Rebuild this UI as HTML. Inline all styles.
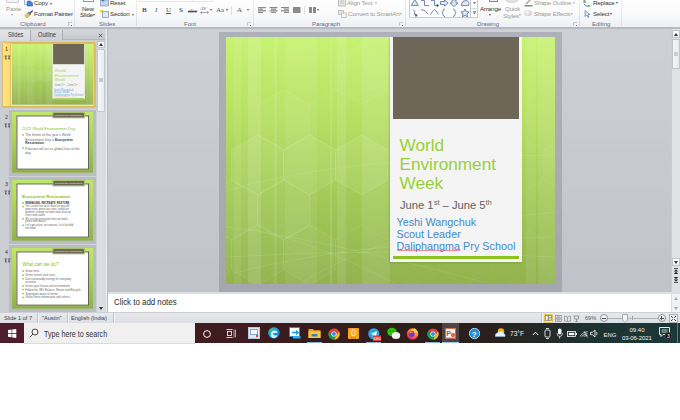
<!DOCTYPE html>
<html><head><meta charset="utf-8">
<style>

*{margin:0;padding:0;box-sizing:border-box}
html,body{width:680px;height:420px;background:#fff;overflow:hidden;font-family:"Liberation Sans",sans-serif}
.a{position:absolute}
#ribbon{left:0;top:0;width:680px;height:29px;background:linear-gradient(#fefefe,#fbfbfc 40%,#eef0f3 92%,#b7bbc1 93%,#b7bbc1);overflow:hidden}
.sep{position:absolute;top:0;width:1px;height:26px;background:linear-gradient(#eceef1,#d9dce0)}
.rt{position:absolute;font-size:6.2px;letter-spacing:-0.15px;color:#333;white-space:nowrap;line-height:6px}
.dis{color:#999}
.gl{position:absolute;top:21px;font-size:6px;color:#5d6b86;white-space:nowrap;line-height:6px}
.arr{position:absolute;width:0;height:0;border-left:1.5px solid transparent;border-right:1.5px solid transparent;border-top:2px solid #555}
.arr.dis{border-top-color:#aaa}
.dl{position:absolute;top:22px;width:4px;height:4px;border-left:1px solid #c4c7cc;border-top:1px solid #c4c7cc}
.dl::after{content:"";position:absolute;left:1.5px;top:1.5px;width:1.6px;height:1.6px;background:#7a7a7a}
.fb{position:absolute;top:7px;font-size:7px;line-height:7px;color:#555;white-space:nowrap}


#main{left:108px;top:29px;width:572px;height:263px;background:linear-gradient(#cdd0d5,#c0c4c9)}
.slide{width:329px;height:247px;overflow:hidden}
.sbg{position:absolute;left:0;top:0;width:329px;height:247px;background:linear-gradient(#c8f272 0%,#b8e064 32%,#a4cc58 62%,#92b24e 100%)}
.st{font-size:17.2px;line-height:19.4px;color:#98d038;white-space:nowrap}
.sd{font-size:11.2px;line-height:12px;color:#606060;white-space:nowrap}
.sd sup{font-size:7.2px;vertical-align:4px;line-height:0;margin-left:0.3px}
.sb{font-size:10.8px;line-height:12.1px;color:#3f8acb;white-space:nowrap}
.sq{background:linear-gradient(#f07080,#f07080) 0 calc(100% - 1px)/100% 0.8px no-repeat}
#left{left:0;top:29px;width:105px;height:283px;background:#cbcfd4}
.lt{font-size:7px;line-height:8px;color:#3a3a3a;white-space:nowrap;transform:scaleX(0.81);transform-origin:0 0}
.tn{font-size:5.5px;line-height:6px;color:#3a3a3a}
.tn2{font-size:5.5px;line-height:6px;color:#444}
.thumb{width:81px;height:61px;overflow:hidden}
.ts{position:absolute;left:0;top:0;width:329px;height:247px;transform:scale(0.2462);transform-origin:0 0;overflow:hidden}
.tfr{width:87px;background:#b9bdc2;border-top:1px solid #d0d3d7}
.tbg{position:absolute;left:0;top:0;width:329px;height:247px;background:linear-gradient(#bfe86a,#a6d058 50%,#8db24a)}
.tcard{left:18px;top:14px;width:295px;height:220px;background:#fff;border:4px solid #5b584c}
.tlab{left:165px;top:1px;width:130px;height:24px;background:#6e6657;border:3px solid #b6d872;color:#f2d444;font-size:10px;font-weight:bold;line-height:18px;text-align:center;white-space:nowrap}
.ttl{left:42px;top:59px;font-size:16.5px;line-height:20px;color:#8cc020;white-space:nowrap}
.tbul{left:42px;top:87px;width:240px;font-size:13.5px;line-height:16.5px;color:#555}
.t3 .tbul{font-size:10.5px;line-height:11.5px;top:87px;width:215px}
.t3 .tbul p{margin-bottom:3.6px}
.t3 .ttl{font-size:17.5px}
.t4 .tbul{font-size:11.5px;line-height:12.5px;top:88px;width:240px}
.t4 .tbul p{margin-bottom:3.2px}
.t4 .ttl{font-size:19px;top:57px}
.tbul p{margin-bottom:4px;padding-left:12px;position:relative}
.tbul i{position:absolute;left:0;top:3px;width:6px;height:6px;background:#8cc020}
.tbul b{color:#333}
#status{left:0;top:312px;width:680px;height:11px;background:linear-gradient(#e7e9ec,#dcdfe3);border-top:1px solid #cdd0d4}
.sbt{top:314.5px;font-size:5.6px;line-height:6px;color:#3a424c;white-space:nowrap}
.ssep{top:313px;width:1px;height:10px;background:#c3c7cc;box-shadow:1px 0 0 #f4f5f6}
.zc{top:314px;width:8px;height:8px;border-radius:50%;background:linear-gradient(#fdfdfd,#e2e4e7);border:1px solid #8c9198}
#taskbar{left:0;top:323px;width:680px;height:20px;background:linear-gradient(90deg,#4a1a25 0%,#421b20 28%,#381c1d 45%,#2e1e1c 60%,#2a201e 72%,#232a28 80%,#1d3333 88%,#1b3838 100%)}
.tbt{font-size:7px;line-height:8px;color:#f2f2f2;white-space:nowrap}

.ts .st{color:#a4d450}
.ts .sb{color:#6aa8e0}
.ts .sd{color:#888}
.ts .ttl{color:#86c01c}
.ts .tbul{color:#666}

</style></head><body>
<div id="ribbon" class="a">
<!-- Clipboard -->
<div class="a" style="left:6px;top:-3px;width:13px;height:6px;border:1px solid #c9ccd0;background:#f4f4f4;border-radius:1px"></div>
<div class="rt dis" style="left:6px;top:6px">Paste</div>
<div class="arr dis" style="left:11px;top:14px"></div>
<svg class="a" style="left:24px;top:-1px" width="10" height="8"><path d="M0.5 0.5 H4 L5.5 2 V5.5 H0.5 Z" fill="#fafcff" stroke="#7b96c4" stroke-width="0.7"/><path d="M3.2 2.3 H6.8 L8.5 4 V7 H3.2 Z" fill="#4a7ed0" stroke="#2f5aa8" stroke-width="0.6"/></svg>
<div class="rt" style="left:34px;top:0px">Copy</div>
<div class="arr" style="left:50px;top:3px"></div>
<svg class="a" style="left:24px;top:9.5px" width="10" height="8.5"><path d="M0.8 6 L3.5 3 L6 5.3 L3 8 Z" fill="#e9cf56" stroke="#9c8a30" stroke-width="0.5"/><path d="M4.8 4 L8.8 0.5" stroke="#4a3a9a" stroke-width="1.3"/><path d="M3.5 3 L5 2 L7 4 L6 5.3" fill="#888" stroke="#555" stroke-width="0.4"/></svg>
<div class="rt" style="left:34px;top:11px">Format Painter</div>
<div class="gl" style="left:20px">Clipboard</div>
<div class="dl" style="left:68px"></div>
<div class="sep" style="left:74px"></div>
<!-- Slides -->
<div class="a" style="left:83px;top:-4px;width:11px;height:6px;border:1px solid #8a9ab0;background:#fff"></div>
<div class="rt" style="left:82px;top:6px">New</div>
<div class="rt" style="left:80px;top:12px">Slide</div>
<div class="arr" style="left:93px;top:14px"></div>
<svg class="a" style="left:100px;top:-1px" width="9" height="8"><rect x="0.5" y="1" width="8" height="6" fill="#c7d6ea" stroke="#7d93b5" stroke-width="0.7"/><circle cx="3" cy="1" r="1.4" fill="#3a6fd0"/></svg>
<div class="rt" style="left:110px;top:0px">Reset</div>
<svg class="a" style="left:100px;top:10px" width="9" height="8"><rect x="0" y="0" width="3" height="2.5" fill="#f0d050"/><rect x="2.5" y="1.5" width="6" height="6" fill="#dfe6f0" stroke="#8090a8" stroke-width="0.7"/></svg>
<div class="rt" style="left:110px;top:11px">Section</div>
<div class="arr" style="left:132px;top:14px"></div>
<div class="gl" style="left:99px">Slides</div>
<div class="sep" style="left:136px"></div>
<!-- Font -->
<div class="a" style="left:139px;top:-3px;width:74px;height:4.5px;border:1px solid #e6e8ec;background:#fff"></div>
<div class="a" style="left:192px;top:-3px;width:1px;height:4.5px;background:#e6e8ec"></div>
<div class="fb" style="left:142px;font-weight:bold;font-family:'Liberation Serif'">B</div>
<div class="fb" style="left:155px;font-style:italic;font-family:'Liberation Serif'">I</div>
<div class="fb" style="left:166px;text-decoration:underline;font-family:'Liberation Serif'">U</div>
<div class="fb" style="left:179px;font-family:'Liberation Serif';font-weight:bold">S</div>
<div class="fb" style="left:188px;font-size:6.5px;top:7px;text-decoration:line-through;font-family:'Liberation Serif'">abc</div>
<div class="fb" style="left:200px;font-size:5px;top:5px;font-family:'Liberation Serif'">AV</div>
<svg class="a" style="left:200px;top:11px" width="10" height="3"><path d="M0.5 1.5 H8.5 M0.5 1.5 L2 0.3 M0.5 1.5 L2 2.7 M8.5 1.5 L7 0.3 M8.5 1.5 L7 2.7" stroke="#777" stroke-width="0.6" fill="none"/></svg>
<div class="arr" style="left:210px;top:9px"></div>
<div class="fb" style="left:216px;font-family:'Liberation Serif'">Aa</div>
<div class="arr" style="left:226px;top:9px"></div>
<div class="a" style="left:231px;top:6px;width:1px;height:9px;background:#dde0e4"></div>
<div class="fb" style="left:237px;font-family:'Liberation Serif'">A</div>
<div class="arr" style="left:247px;top:9px"></div>
<div class="gl" style="left:184px">Font</div>
<div class="dl" style="left:247px"></div>
<div class="sep" style="left:253px"></div>
<!-- Paragraph -->
<svg class="a" style="left:258px;top:7px" width="44" height="7" fill="#8a8a8a">
<rect x="0" y="0" width="8" height="1.2"/><rect x="0" y="1.6" width="5" height="1.2"/><rect x="0" y="3.2" width="8" height="1.2"/><rect x="0" y="4.8" width="5" height="1.2"/>
<rect x="11.5" y="0" width="8" height="1.2"/><rect x="13" y="1.6" width="5" height="1.2"/><rect x="11.5" y="3.2" width="8" height="1.2"/><rect x="13" y="4.8" width="5" height="1.2"/>
<rect x="23" y="0" width="8" height="1.2"/><rect x="26" y="1.6" width="5" height="1.2"/><rect x="23" y="3.2" width="8" height="1.2"/><rect x="26" y="4.8" width="5" height="1.2"/>
<rect x="35" y="0" width="7.5" height="6"/>
</svg>
<div class="a" style="left:304px;top:6px;width:1px;height:9px;background:#dde0e4"></div>
<svg class="a" style="left:309px;top:7px" width="8" height="7" fill="#8a8a8a"><rect x="0" y="0" width="3" height="6"/><rect x="4" y="0" width="3" height="6"/></svg>
<div class="arr" style="left:317px;top:9px"></div>
<div class="gl" style="left:312px">Paragraph</div>
<svg class="a" style="left:338px;top:-1px" width="8" height="8"><rect x="0.5" y="0" width="7" height="7" fill="#e8e8e8" stroke="#aaa" stroke-width="0.7"/><path d="M2 2h4M2 4h4" stroke="#aaa" stroke-width="0.6"/></svg>
<div class="rt dis" style="left:347px;top:0px">Align Text</div>
<div class="arr dis" style="left:375px;top:2px"></div>
<svg class="a" style="left:338px;top:10px" width="9" height="8"><rect x="0.5" y="0.5" width="5" height="4" fill="#e6e6e6" stroke="#aaa" stroke-width="0.6"/><rect x="3.5" y="3" width="5" height="4.5" fill="#f2f2f2" stroke="#aaa" stroke-width="0.6"/></svg>
<div class="rt dis" style="left:348px;top:11px">Convert to SmartArt</div>
<div class="arr dis" style="left:400px;top:13px"></div>
<div class="dl" style="left:399px"></div>
<div class="sep" style="left:405px"></div>
<!-- Drawing -->
<div class="a" style="left:409px;top:-3px;width:69px;height:21px;border:1px solid #c9cdd3;background:#fff"></div>
<div class="a" style="left:470px;top:-3px;width:1px;height:21px;background:#c6cad0"></div>
<div class="a" style="left:471px;top:8px;width:6px;height:1px;background:#d8dbe0"></div>
<svg class="a" style="left:410px;top:-1px" width="60" height="19" fill="none" stroke="#4a6496" stroke-width="0.75">
<path d="M1.2 6.6 L4.8 0.5 L8.4 6.6 Z" fill="#dfe8f4"/>
<path d="M11 1.5 H14.5 V6.5 H19"/>
<path d="M21 1.5 H24.5 V6.5 H27.5"/><path d="M27 5.3 L28.8 6.5 L27 7.7 Z" fill="#2a3a60"/>
<path d="M30.5 2.5 H34.5 V0.8 L38.2 4 L34.5 7.2 V5.5 H30.5 Z" fill="#dfe8f4"/>
<path d="M42 0.8 H46 V4 H48 L44 7.6 L40 4 H42 Z" fill="#dfe8f4"/>
<path d="M51.5 6.6 Q50.5 4.5 52.5 4 Q52.5 1.5 55 1.8 Q57.5 0.5 58.5 3.2 Q59.8 4.5 58.5 6.6 Z" fill="#dfe8f4"/>
<path d="M3 10.5 L5 13 L4 15 L6.5 16.5"/><path d="M5.5 15 L7.3 16.3 L5.8 17.6 Z" fill="#2a3a60"/>
<path d="M11 10.5 Q15.5 10 18 15.5"/>
<path d="M20.5 15.5 Q23 11 24.5 10.5 Q26 11 28.5 15.5"/>
<path d="M35 10 Q33 10 33 12 Q33 13.6 31.8 13.8 Q33 14 33 15.6 Q33 17.5 35 17.5"/>
<path d="M43 10 Q45 10 45 12 Q45 13.6 46.2 13.8 Q45 14 45 15.6 Q45 17.5 43 17.5"/>
<path d="M55 10 L56.3 12.7 L59.2 13 L57 15 L57.7 17.8 L55 16.4 L52.3 17.8 L53 15 L50.8 13 L53.7 12.7 Z" fill="#dfe8f4"/>
</svg>
<svg class="a" style="left:471px;top:0px" width="7" height="18" fill="#555"><path d="M2 2.3 H5 L3.5 4 Z"/><rect x="2" y="11" width="3" height="0.6"/><path d="M2 12.5 H5 L3.5 14.2 Z"/></svg>
<div class="a" style="left:489px;top:-4px;width:9px;height:6px;border:1px solid #888;background:#eee"></div>
<div class="rt" style="left:480px;top:6px">Arrange</div>
<div class="arr" style="left:489px;top:14px"></div>
<div class="a" style="left:505px;top:-6px;width:14px;height:9px;border-radius:50%;background:radial-gradient(#f4f4f4,#c8c8c8)"></div>
<div class="rt dis" style="left:505px;top:6px">Quick</div>
<div class="rt dis" style="left:503px;top:13px">Styles</div>
<div class="arr dis" style="left:519px;top:14px"></div>
<svg class="a" style="left:524px;top:-1px" width="9" height="8"><path d="M2 5 L7 0" stroke="#aaa" stroke-width="1.5"/><rect x="0.5" y="6" width="8" height="1.5" fill="#888"/></svg>
<div class="rt dis" style="left:534px;top:0px">Shape Outline</div>
<div class="arr dis" style="left:573px;top:2px"></div>
<div class="a" style="left:524px;top:10px;width:8px;height:6px;border-radius:50%;background:radial-gradient(circle at 40% 35%,#f8f8f8,#bdbdbd)"></div>
<div class="rt dis" style="left:534px;top:11px">Shape Effects</div>
<div class="arr dis" style="left:571px;top:13px"></div>
<div class="gl" style="left:477px">Drawing</div>
<div class="dl" style="left:573px"></div>
<div class="sep" style="left:579px"></div>
<!-- Editing -->
<svg class="a" style="left:583px;top:-1px" width="9" height="9"><text x="0" y="4" font-size="5" font-family="Liberation Sans" fill="#444">a</text><path d="M1 5 L3 7 L6 7" stroke="#2a66c0" stroke-width="0.8" fill="none"/><path d="M5.5 6 L8 7 L5.5 8 Z" fill="#34a034"/></svg>
<div class="rt" style="left:593px;top:0px">Replace</div>
<div class="arr" style="left:616px;top:2px"></div>
<svg class="a" style="left:584px;top:10px" width="7" height="8"><path d="M1 0.5 L1 6.5 L2.5 5 L4 7.5 L5 7 L3.8 4.6 L6 4.5 Z" fill="#d9e6f5" stroke="#4870b0" stroke-width="0.6"/></svg>
<div class="rt" style="left:593px;top:11px">Select</div>
<div class="arr" style="left:610px;top:13px"></div>
<div class="gl" style="left:592px">Editing</div>
<div class="sep" style="left:621px"></div>
</div>
<div id="left" class="a"></div>
<div class="a" style="left:105px;top:29px;width:3px;height:283px;background:#eff0f2;border-left:1px solid #d5d8dc;border-right:1px solid #b8bcc2"></div>
<div class="a" style="left:0;top:29px;width:105px;height:11px;background:linear-gradient(#d3d6da,#c6cace);border-bottom:1px solid #b3b7bd"></div>
<div class="a" style="left:0;top:30px;width:31px;height:11px;background:linear-gradient(#e3e5e8,#d6d9dd);border-right:1px solid #a9adb3"></div>
<div class="a" style="left:31px;top:30px;width:32px;height:10px;background:linear-gradient(#d8dbdf,#cdd0d4);border-right:1px solid #a9adb3"></div>
<div class="a lt" style="left:8px;top:31px">Slides</div>
<div class="a lt" style="left:38px;top:31px">Outline</div>
<svg class="a" style="left:97px;top:32px" width="7" height="7"><path d="M1.8 1.8 L5.2 5.2 M5.2 1.8 L1.8 5.2" stroke="#555" stroke-width="0.9"/></svg>
<!-- scrollbar -->
<div class="a" style="left:97px;top:41px;width:8px;height:271px;background:#dadde1"></div>
<div class="a" style="left:97px;top:41px;width:8px;height:7px;background:linear-gradient(#fbfbfc,#eceef0);border:1px solid #c4c8cd"></div>
<div class="a" style="left:99px;top:43px;width:0;height:0;border-left:2.5px solid transparent;border-right:2.5px solid transparent;border-bottom:3px solid #333"></div>
<div class="a" style="left:97px;top:49px;width:8px;height:63px;background:linear-gradient(90deg,#f7f8f9,#e9ebee);border:1px solid #c4c8cd;border-radius:1px"></div>
<div class="a" style="left:99px;top:78px;width:4px;height:4px;background:#c6c9ce"></div>
<div class="a" style="left:99px;top:307px;width:0;height:0;border-left:2.5px solid transparent;border-right:2.5px solid transparent;border-top:3px solid #333"></div>
<!-- thumb 1 selected -->
<div class="a" style="left:1.5px;top:41.5px;width:94.5px;height:66.5px;border:2px solid #e0bd58;border-radius:2px"></div>
<div class="a" style="left:3px;top:43px;width:7px;height:63px;background:linear-gradient(90deg,#ffe486,#fddb70)"></div>
<div class="a" style="left:9.5px;top:43px;width:2.5px;height:63px;background:#e6c462"></div>
<div class="a" style="left:11.3px;top:43.5px;width:82px;height:62px;background:#e2e6d8"></div>
<div class="a tn" style="left:5px;top:46px">1</div>
<svg class="a" style="left:3.5px;top:54.5px" width="7" height="5" fill="none" stroke="#444" stroke-width="0.7"><path d="M0.5 1 H3 M1.8 1 V4.5 M0.8 2.8 L2.8 4.2 M3.8 1 H6.5 M5.1 1 V4.5 M4 2.8 L6 4.2"/></svg>
<div class="a thumb" style="left:12px;top:44px"><div class="ts"><div class="sbg"></div>
<svg class="a" style="left:0;top:0" width="329" height="247">
<g fill="#fff">
<rect x="8" y="0" width="7" height="247" opacity="0.08"/>
<rect x="22" y="0" width="13" height="247" opacity="0.12"/>
<rect x="48" y="0" width="3" height="247" opacity="0.10"/>
<rect x="59" y="0" width="32" height="247" opacity="0.07"/>
<rect x="104" y="0" width="2" height="247" opacity="0.12"/>
<rect x="111" y="0" width="9" height="247" opacity="0.10"/>
<rect x="136" y="0" width="3" height="247" opacity="0.10"/>
<rect x="139" y="0" width="25" height="247" opacity="0.10"/>
<rect x="300" y="0" width="10" height="247" opacity="0.08"/>
<rect x="312" y="0" width="17" height="247" opacity="0.10"/>
</g>
<g fill="#fff" stroke="#fff" stroke-width="0.8"><path d="M-20.3 7 L5.7 22 L5.7 52 L-20.3 67 L-46.3 52 L-46.3 22 Z" fill-opacity="0.0" stroke-opacity="0.045"/><path d="M31.7 7 L57.7 22 L57.7 52 L31.7 67 L5.7 52 L5.7 22 Z" fill-opacity="0.0" stroke-opacity="0.045"/><path d="M83.7 7 L109.7 22 L109.7 52 L83.7 67 L57.7 52 L57.7 22 Z" fill-opacity="0.0" stroke-opacity="0.045"/><path d="M135.7 7 L161.7 22 L161.7 52 L135.7 67 L109.7 52 L109.7 22 Z" fill-opacity="0.03" stroke-opacity="0.1"/><path d="M187.7 7 L213.7 22 L213.7 52 L187.7 67 L161.7 52 L161.7 22 Z" fill-opacity="0.0" stroke-opacity="0.045"/><path d="M239.7 7 L265.7 22 L265.7 52 L239.7 67 L213.7 52 L213.7 22 Z" fill-opacity="0.0" stroke-opacity="0.045"/><path d="M291.7 7 L317.7 22 L317.7 52 L291.7 67 L265.7 52 L265.7 22 Z" fill-opacity="0.0" stroke-opacity="0.045"/><path d="M343.7 7 L369.7 22 L369.7 52 L343.7 67 L317.7 52 L317.7 22 Z" fill-opacity="0.0" stroke-opacity="0.045"/><path d="M5.7 53 L31.7 68 L31.7 98 L5.7 113 L-20.3 98 L-20.3 68 Z" fill-opacity="0.0" stroke-opacity="0.045"/><path d="M57.7 53 L83.7 68 L83.7 98 L57.7 113 L31.7 98 L31.7 68 Z" fill-opacity="0.035" stroke-opacity="0.12"/><path d="M109.7 53 L135.7 68 L135.7 98 L109.7 113 L83.7 98 L83.7 68 Z" fill-opacity="0.0" stroke-opacity="0.045"/><path d="M161.7 53 L187.7 68 L187.7 98 L161.7 113 L135.7 98 L135.7 68 Z" fill-opacity="0.0" stroke-opacity="0.045"/><path d="M213.7 53 L239.7 68 L239.7 98 L213.7 113 L187.7 98 L187.7 68 Z" fill-opacity="0.0" stroke-opacity="0.045"/><path d="M265.7 53 L291.7 68 L291.7 98 L265.7 113 L239.7 98 L239.7 68 Z" fill-opacity="0.0" stroke-opacity="0.045"/><path d="M317.7 53 L343.7 68 L343.7 98 L317.7 113 L291.7 98 L291.7 68 Z" fill-opacity="0.0" stroke-opacity="0.045"/><path d="M-20.3 98 L5.7 113 L5.7 143 L-20.3 158 L-46.3 143 L-46.3 113 Z" fill-opacity="0.0" stroke-opacity="0.045"/><path d="M31.7 98 L57.7 113 L57.7 143 L31.7 158 L5.7 143 L5.7 113 Z" fill-opacity="0.07" stroke-opacity="0.16"/><path d="M83.7 98 L109.7 113 L109.7 143 L83.7 158 L57.7 143 L57.7 113 Z" fill-opacity="0.07" stroke-opacity="0.16"/><path d="M135.7 98 L161.7 113 L161.7 143 L135.7 158 L109.7 143 L109.7 113 Z" fill-opacity="0.07" stroke-opacity="0.16"/><path d="M187.7 98 L213.7 113 L213.7 143 L187.7 158 L161.7 143 L161.7 113 Z" fill-opacity="0.0" stroke-opacity="0.045"/><path d="M239.7 98 L265.7 113 L265.7 143 L239.7 158 L213.7 143 L213.7 113 Z" fill-opacity="0.0" stroke-opacity="0.045"/><path d="M291.7 98 L317.7 113 L317.7 143 L291.7 158 L265.7 143 L265.7 113 Z" fill-opacity="0.0" stroke-opacity="0.045"/><path d="M343.7 98 L369.7 113 L369.7 143 L343.7 158 L317.7 143 L317.7 113 Z" fill-opacity="0.03" stroke-opacity="0.1"/><path d="M5.7 143 L31.7 158 L31.7 188 L5.7 203 L-20.3 188 L-20.3 158 Z" fill-opacity="0.05" stroke-opacity="0.13"/><path d="M57.7 143 L83.7 158 L83.7 188 L57.7 203 L31.7 188 L31.7 158 Z" fill-opacity="0.05" stroke-opacity="0.13"/><path d="M109.7 143 L135.7 158 L135.7 188 L109.7 203 L83.7 188 L83.7 158 Z" fill-opacity="0.0" stroke-opacity="0.045"/><path d="M161.7 143 L187.7 158 L187.7 188 L161.7 203 L135.7 188 L135.7 158 Z" fill-opacity="0.0" stroke-opacity="0.045"/><path d="M213.7 143 L239.7 158 L239.7 188 L213.7 203 L187.7 188 L187.7 158 Z" fill-opacity="0.0" stroke-opacity="0.045"/><path d="M265.7 143 L291.7 158 L291.7 188 L265.7 203 L239.7 188 L239.7 158 Z" fill-opacity="0.0" stroke-opacity="0.045"/><path d="M317.7 143 L343.7 158 L343.7 188 L317.7 203 L291.7 188 L291.7 158 Z" fill-opacity="0.0" stroke-opacity="0.045"/><path d="M-20.3 188 L5.7 203 L5.7 233 L-20.3 248 L-46.3 233 L-46.3 203 Z" fill-opacity="0.03" stroke-opacity="0.1"/><path d="M31.7 188 L57.7 203 L57.7 233 L31.7 248 L5.7 233 L5.7 203 Z" fill-opacity="0.03" stroke-opacity="0.1"/><path d="M83.7 188 L109.7 203 L109.7 233 L83.7 248 L57.7 233 L57.7 203 Z" fill-opacity="0.03" stroke-opacity="0.1"/><path d="M135.7 188 L161.7 203 L161.7 233 L135.7 248 L109.7 233 L109.7 203 Z" fill-opacity="0.0" stroke-opacity="0.045"/><path d="M187.7 188 L213.7 203 L213.7 233 L187.7 248 L161.7 233 L161.7 203 Z" fill-opacity="0.0" stroke-opacity="0.045"/><path d="M239.7 188 L265.7 203 L265.7 233 L239.7 248 L213.7 233 L213.7 203 Z" fill-opacity="0.0" stroke-opacity="0.045"/><path d="M291.7 188 L317.7 203 L317.7 233 L291.7 248 L265.7 233 L265.7 203 Z" fill-opacity="0.0" stroke-opacity="0.045"/><path d="M343.7 188 L369.7 203 L369.7 233 L343.7 248 L317.7 233 L317.7 203 Z" fill-opacity="0.0" stroke-opacity="0.045"/><path d="M5.7 233 L31.7 248 L31.7 278 L5.7 293 L-20.3 278 L-20.3 248 Z" fill-opacity="0.0" stroke-opacity="0.045"/><path d="M57.7 233 L83.7 248 L83.7 278 L57.7 293 L31.7 278 L31.7 248 Z" fill-opacity="0.0" stroke-opacity="0.045"/><path d="M109.7 233 L135.7 248 L135.7 278 L109.7 293 L83.7 278 L83.7 248 Z" fill-opacity="0.0" stroke-opacity="0.045"/><path d="M161.7 233 L187.7 248 L187.7 278 L161.7 293 L135.7 278 L135.7 248 Z" fill-opacity="0.0" stroke-opacity="0.045"/><path d="M213.7 233 L239.7 248 L239.7 278 L213.7 293 L187.7 278 L187.7 248 Z" fill-opacity="0.0" stroke-opacity="0.045"/><path d="M265.7 233 L291.7 248 L291.7 278 L265.7 293 L239.7 278 L239.7 248 Z" fill-opacity="0.0" stroke-opacity="0.045"/><path d="M317.7 233 L343.7 248 L343.7 278 L317.7 293 L291.7 278 L291.7 248 Z" fill-opacity="0.0" stroke-opacity="0.045"/></g>
<g fill="none" stroke="#fff" stroke-opacity="0.17" stroke-width="0.6">
<path d="M0 154 Q110 120 329 118"/>
<path d="M0 190 Q120 205 329 265"/>
<path d="M0 220 Q160 210 329 220"/>
<path d="M74 247 Q160 190 329 175"/>
<path d="M25 192 Q90 205 170 247"/>
<path d="M0 238 Q120 205 329 200"/>
</g>
</svg>
<div class="a" style="left:164px;top:0;width:132px;height:225px;background:#f4f4f4;box-shadow:-1px 1px 2px rgba(0,0,0,0.15)"></div>
<div class="a" style="left:167px;top:0;width:126px;height:82px;background:#6e6657"></div>
<div class="a" style="left:167px;top:219px;width:126px;height:3px;background:#8dc21f"></div>
<div class="a st" style="left:173.5px;top:98.5px">World<br>Environment<br>Week</div>
<div class="a sd" style="left:174px;top:162px">June 1<sup>st</sup> – June 5<sup>th</sup></div>
<div class="a sb" style="left:170.5px;top:178.5px">Yeshi Wangchuk<br>Scout Leader<br><span class="sq">Daliphangma</span> Pry School</div>
</div></div>
<!-- thumb 2..4 frames -->
<div class="a tfr" style="left:9px;top:109px;height:67px"></div>
<div class="a tfr" style="left:9px;top:176px;height:68px"></div>
<div class="a tfr" style="left:9px;top:244px;height:68px"></div>
<div class="a tn" style="left:5px;top:114px">2</div>
<svg class="a" style="left:3.5px;top:122.5px" width="7" height="5" fill="none" stroke="#444" stroke-width="0.7"><path d="M0.5 1 H3 M1.8 1 V4.5 M0.8 2.8 L2.8 4.2 M3.8 1 H6.5 M5.1 1 V4.5 M4 2.8 L6 4.2"/></svg>
<div class="a tn" style="left:5px;top:181px">3</div>
<svg class="a" style="left:3.5px;top:190px" width="7" height="5" fill="none" stroke="#444" stroke-width="0.7"><path d="M0.5 1 H3 M1.8 1 V4.5 M0.8 2.8 L2.8 4.2 M3.8 1 H6.5 M5.1 1 V4.5 M4 2.8 L6 4.2"/></svg>
<div class="a tn" style="left:5px;top:249px">4</div>
<svg class="a" style="left:3.5px;top:258px" width="7" height="5" fill="none" stroke="#444" stroke-width="0.7"><path d="M0.5 1 H3 M1.8 1 V4.5 M0.8 2.8 L2.8 4.2 M3.8 1 H6.5 M5.1 1 V4.5 M4 2.8 L6 4.2"/></svg>
<div class="a thumb" style="left:12px;top:112px"><div class="ts"><div class="tbg"></div><div class="a tcard"></div><div class="a tlab">Ecosystem Restoration</div><div class="a ttl">2021  World Environment Day</div><div class="a tbul"><p><i></i>The theme of this year’s World Environment Day is <b>Ecosystem Restoration</b>.</p><p><i></i>Pakistan will act as global host of the day.</p></div></div></div>
<div class="a thumb" style="left:12px;top:179.5px"><div class="ts t3"><div class="tbg"></div><div class="a tcard"></div><div class="a tlab">Ecosystem Restoration</div><div class="a ttl"><b style="font-weight:bold">Ecosystem Restoration</b></div><div class="a tbul"><p><i></i><b>REIMAGINE. RECREATE. RESTORE.</b></p><p><i></i>The current fun-facts: How fun you will grow trees, green our cities, rewild our gardens, change our diets and clean up rivers and coasts.</p><p><i></i>We are the generation that can make peace with nature.</p><p><i></i>Let’s get active, not anxious. Let’s be bold, not timid.</p></div></div></div>
<div class="a thumb" style="left:12px;top:247.5px;height:61px"><div class="ts t4"><div class="tbg"></div><div class="a tcard"></div><div class="a tlab">Ecosystem Restoration</div><div class="a ttl">What can we do?</div><div class="a tbul"><p><i></i>Grow trees</p><p><i></i>Green streets and cities</p><p><i></i>Use sustainably energy for everyday<br>activities</p><p><i></i>Green your house and environment</p><p><i></i>Follow the 3Rs Reduce, Reuse and Recycle</p><p><i></i>Segregate waste at home</p><p><i></i>Share these information with others</p></div></div></div>
<div id="main" class="a"></div>
<div class="a" style="left:219px;top:32px;width:343px;height:260px;background:linear-gradient(#aeb2b8,#a4a8ae)"></div>
<div class="a slide" style="left:226px;top:37px">
<div class="sbg"></div>
<svg class="a" style="left:0;top:0" width="329" height="247">
<g fill="#fff">
<rect x="8" y="0" width="7" height="247" opacity="0.08"/>
<rect x="22" y="0" width="13" height="247" opacity="0.12"/>
<rect x="48" y="0" width="3" height="247" opacity="0.10"/>
<rect x="59" y="0" width="32" height="247" opacity="0.07"/>
<rect x="104" y="0" width="2" height="247" opacity="0.12"/>
<rect x="111" y="0" width="9" height="247" opacity="0.10"/>
<rect x="136" y="0" width="3" height="247" opacity="0.10"/>
<rect x="139" y="0" width="25" height="247" opacity="0.10"/>
<rect x="300" y="0" width="10" height="247" opacity="0.08"/>
<rect x="312" y="0" width="17" height="247" opacity="0.10"/>
</g>
<g fill="#fff" stroke="#fff" stroke-width="0.8"><path d="M-20.3 7 L5.7 22 L5.7 52 L-20.3 67 L-46.3 52 L-46.3 22 Z" fill-opacity="0.0" stroke-opacity="0.045"/><path d="M31.7 7 L57.7 22 L57.7 52 L31.7 67 L5.7 52 L5.7 22 Z" fill-opacity="0.0" stroke-opacity="0.045"/><path d="M83.7 7 L109.7 22 L109.7 52 L83.7 67 L57.7 52 L57.7 22 Z" fill-opacity="0.0" stroke-opacity="0.045"/><path d="M135.7 7 L161.7 22 L161.7 52 L135.7 67 L109.7 52 L109.7 22 Z" fill-opacity="0.03" stroke-opacity="0.1"/><path d="M187.7 7 L213.7 22 L213.7 52 L187.7 67 L161.7 52 L161.7 22 Z" fill-opacity="0.0" stroke-opacity="0.045"/><path d="M239.7 7 L265.7 22 L265.7 52 L239.7 67 L213.7 52 L213.7 22 Z" fill-opacity="0.0" stroke-opacity="0.045"/><path d="M291.7 7 L317.7 22 L317.7 52 L291.7 67 L265.7 52 L265.7 22 Z" fill-opacity="0.0" stroke-opacity="0.045"/><path d="M343.7 7 L369.7 22 L369.7 52 L343.7 67 L317.7 52 L317.7 22 Z" fill-opacity="0.0" stroke-opacity="0.045"/><path d="M5.7 53 L31.7 68 L31.7 98 L5.7 113 L-20.3 98 L-20.3 68 Z" fill-opacity="0.0" stroke-opacity="0.045"/><path d="M57.7 53 L83.7 68 L83.7 98 L57.7 113 L31.7 98 L31.7 68 Z" fill-opacity="0.035" stroke-opacity="0.12"/><path d="M109.7 53 L135.7 68 L135.7 98 L109.7 113 L83.7 98 L83.7 68 Z" fill-opacity="0.0" stroke-opacity="0.045"/><path d="M161.7 53 L187.7 68 L187.7 98 L161.7 113 L135.7 98 L135.7 68 Z" fill-opacity="0.0" stroke-opacity="0.045"/><path d="M213.7 53 L239.7 68 L239.7 98 L213.7 113 L187.7 98 L187.7 68 Z" fill-opacity="0.0" stroke-opacity="0.045"/><path d="M265.7 53 L291.7 68 L291.7 98 L265.7 113 L239.7 98 L239.7 68 Z" fill-opacity="0.0" stroke-opacity="0.045"/><path d="M317.7 53 L343.7 68 L343.7 98 L317.7 113 L291.7 98 L291.7 68 Z" fill-opacity="0.0" stroke-opacity="0.045"/><path d="M-20.3 98 L5.7 113 L5.7 143 L-20.3 158 L-46.3 143 L-46.3 113 Z" fill-opacity="0.0" stroke-opacity="0.045"/><path d="M31.7 98 L57.7 113 L57.7 143 L31.7 158 L5.7 143 L5.7 113 Z" fill-opacity="0.07" stroke-opacity="0.16"/><path d="M83.7 98 L109.7 113 L109.7 143 L83.7 158 L57.7 143 L57.7 113 Z" fill-opacity="0.07" stroke-opacity="0.16"/><path d="M135.7 98 L161.7 113 L161.7 143 L135.7 158 L109.7 143 L109.7 113 Z" fill-opacity="0.07" stroke-opacity="0.16"/><path d="M187.7 98 L213.7 113 L213.7 143 L187.7 158 L161.7 143 L161.7 113 Z" fill-opacity="0.0" stroke-opacity="0.045"/><path d="M239.7 98 L265.7 113 L265.7 143 L239.7 158 L213.7 143 L213.7 113 Z" fill-opacity="0.0" stroke-opacity="0.045"/><path d="M291.7 98 L317.7 113 L317.7 143 L291.7 158 L265.7 143 L265.7 113 Z" fill-opacity="0.0" stroke-opacity="0.045"/><path d="M343.7 98 L369.7 113 L369.7 143 L343.7 158 L317.7 143 L317.7 113 Z" fill-opacity="0.03" stroke-opacity="0.1"/><path d="M5.7 143 L31.7 158 L31.7 188 L5.7 203 L-20.3 188 L-20.3 158 Z" fill-opacity="0.05" stroke-opacity="0.13"/><path d="M57.7 143 L83.7 158 L83.7 188 L57.7 203 L31.7 188 L31.7 158 Z" fill-opacity="0.05" stroke-opacity="0.13"/><path d="M109.7 143 L135.7 158 L135.7 188 L109.7 203 L83.7 188 L83.7 158 Z" fill-opacity="0.0" stroke-opacity="0.045"/><path d="M161.7 143 L187.7 158 L187.7 188 L161.7 203 L135.7 188 L135.7 158 Z" fill-opacity="0.0" stroke-opacity="0.045"/><path d="M213.7 143 L239.7 158 L239.7 188 L213.7 203 L187.7 188 L187.7 158 Z" fill-opacity="0.0" stroke-opacity="0.045"/><path d="M265.7 143 L291.7 158 L291.7 188 L265.7 203 L239.7 188 L239.7 158 Z" fill-opacity="0.0" stroke-opacity="0.045"/><path d="M317.7 143 L343.7 158 L343.7 188 L317.7 203 L291.7 188 L291.7 158 Z" fill-opacity="0.0" stroke-opacity="0.045"/><path d="M-20.3 188 L5.7 203 L5.7 233 L-20.3 248 L-46.3 233 L-46.3 203 Z" fill-opacity="0.03" stroke-opacity="0.1"/><path d="M31.7 188 L57.7 203 L57.7 233 L31.7 248 L5.7 233 L5.7 203 Z" fill-opacity="0.03" stroke-opacity="0.1"/><path d="M83.7 188 L109.7 203 L109.7 233 L83.7 248 L57.7 233 L57.7 203 Z" fill-opacity="0.03" stroke-opacity="0.1"/><path d="M135.7 188 L161.7 203 L161.7 233 L135.7 248 L109.7 233 L109.7 203 Z" fill-opacity="0.0" stroke-opacity="0.045"/><path d="M187.7 188 L213.7 203 L213.7 233 L187.7 248 L161.7 233 L161.7 203 Z" fill-opacity="0.0" stroke-opacity="0.045"/><path d="M239.7 188 L265.7 203 L265.7 233 L239.7 248 L213.7 233 L213.7 203 Z" fill-opacity="0.0" stroke-opacity="0.045"/><path d="M291.7 188 L317.7 203 L317.7 233 L291.7 248 L265.7 233 L265.7 203 Z" fill-opacity="0.0" stroke-opacity="0.045"/><path d="M343.7 188 L369.7 203 L369.7 233 L343.7 248 L317.7 233 L317.7 203 Z" fill-opacity="0.0" stroke-opacity="0.045"/><path d="M5.7 233 L31.7 248 L31.7 278 L5.7 293 L-20.3 278 L-20.3 248 Z" fill-opacity="0.0" stroke-opacity="0.045"/><path d="M57.7 233 L83.7 248 L83.7 278 L57.7 293 L31.7 278 L31.7 248 Z" fill-opacity="0.0" stroke-opacity="0.045"/><path d="M109.7 233 L135.7 248 L135.7 278 L109.7 293 L83.7 278 L83.7 248 Z" fill-opacity="0.0" stroke-opacity="0.045"/><path d="M161.7 233 L187.7 248 L187.7 278 L161.7 293 L135.7 278 L135.7 248 Z" fill-opacity="0.0" stroke-opacity="0.045"/><path d="M213.7 233 L239.7 248 L239.7 278 L213.7 293 L187.7 278 L187.7 248 Z" fill-opacity="0.0" stroke-opacity="0.045"/><path d="M265.7 233 L291.7 248 L291.7 278 L265.7 293 L239.7 278 L239.7 248 Z" fill-opacity="0.0" stroke-opacity="0.045"/><path d="M317.7 233 L343.7 248 L343.7 278 L317.7 293 L291.7 278 L291.7 248 Z" fill-opacity="0.0" stroke-opacity="0.045"/></g>
<g fill="none" stroke="#fff" stroke-opacity="0.17" stroke-width="0.6">
<path d="M0 154 Q110 120 329 118"/>
<path d="M0 190 Q120 205 329 265"/>
<path d="M0 220 Q160 210 329 220"/>
<path d="M74 247 Q160 190 329 175"/>
<path d="M25 192 Q90 205 170 247"/>
<path d="M0 238 Q120 205 329 200"/>
</g>
</svg>
<div class="a" style="left:164px;top:0;width:132px;height:225px;background:#f4f4f4;box-shadow:-1px 1px 2px rgba(0,0,0,0.15)"></div>
<div class="a" style="left:167px;top:0;width:126px;height:82px;background:#6e6657"></div>
<div class="a" style="left:167px;top:219px;width:126px;height:3px;background:#8dc21f"></div>
<div class="a st" style="left:173.5px;top:98.5px">World<br>Environment<br>Week</div>
<div class="a sd" style="left:174px;top:162px">June 1<sup>st</sup> – June 5<sup>th</sup></div>
<div class="a sb" style="left:170.5px;top:178.5px">Yeshi Wangchuk<br>Scout Leader<br><span class="sq">Daliphangma</span> Pry School</div>

</div>
<!-- right scrollbar -->
<div class="a" style="left:671px;top:29px;width:9px;height:263px;background:#dfe2e5;border-left:1px solid #c9ccd0"></div>
<div class="a" style="left:672px;top:30px;width:8px;height:8px;background:linear-gradient(#fff,#eceef1);border:1px solid #c0c4c9"></div>
<div class="a" style="left:674px;top:33px;width:0;height:0;border-left:2.5px solid transparent;border-right:2.5px solid transparent;border-bottom:3px solid #333"></div>
<div class="a" style="left:672px;top:39px;width:8px;height:30px;background:linear-gradient(90deg,#f4f5f7,#e8eaed);border:1px solid #c0c4c9"></div>
<div class="a" style="left:674px;top:52px;width:4px;height:4px;background:#c8cbd0"></div>
<div class="a" style="left:672px;top:258px;width:8px;height:8px;background:linear-gradient(#fff,#eceef1);border:1px solid #c0c4c9"></div>
<div class="a" style="left:674px;top:261px;width:0;height:0;border-left:2.5px solid transparent;border-right:2.5px solid transparent;border-top:3px solid #333"></div>
<svg class="a" style="left:672px;top:268px" width="8" height="16" fill="#222"><rect x="2" y="0.3" width="4" height="0.8"/><path d="M1.8 3.6 L4 1.4 L6.2 3.6 Z M1.8 6 L4 3.8 L6.2 6 Z M1.8 9 L4 11.2 L6.2 9 Z M1.8 11.4 L4 13.6 L6.2 11.4 Z"/><rect x="2" y="13.9" width="4" height="0.8"/></svg>
<!-- notes -->
<div class="a" style="left:108px;top:292px;width:572px;height:20px;background:#fff;border-top:2px solid #dcdfe3"></div>
<div class="a" style="left:113.5px;top:297px;font-size:9px;line-height:10px;color:#2a2a2a;white-space:nowrap;transform:scaleX(0.875);transform-origin:0 0">Click to add notes</div>
<div class="a" style="left:671px;top:294px;width:9px;height:18px;background:#f1f2f4;border-left:1px solid #d8dbdf"></div>
<div class="a" style="left:674px;top:297px;width:0;height:0;border-left:2.5px solid transparent;border-right:2.5px solid transparent;border-bottom:3px solid #a8acb2"></div>
<div class="a" style="left:674px;top:307px;width:0;height:0;border-left:2.5px solid transparent;border-right:2.5px solid transparent;border-top:3px solid #a8acb2"></div>
<div id="status" class="a"></div>
<div class="a sbt" style="left:4px">Slide 1 of 7</div>
<div class="a ssep" style="left:37px"></div>
<div class="a sbt" style="left:42px">"Austin"</div>
<div class="a ssep" style="left:67px"></div>
<div class="a sbt" style="left:71px">English (India)</div>
<div class="a ssep" style="left:113px"></div>
<div class="a ssep" style="left:541px"></div>
<div class="a" style="left:544px;top:313.5px;width:9px;height:9px;background:#fff2b0;border:1px solid #e9c24a;border-radius:1px"></div>
<svg class="a" style="left:545px;top:315px" width="7" height="6"><rect x="0.5" y="0.5" width="2.5" height="5" fill="#fff" stroke="#777" stroke-width="0.7"/><rect x="3.5" y="0.5" width="3" height="5" fill="#fff" stroke="#777" stroke-width="0.7"/><path d="M4 2.5h2M4 4h2" stroke="#777" stroke-width="0.6"/></svg>
<svg class="a" style="left:555px;top:315px" width="7" height="7" fill="none" stroke="#8a8a8a" stroke-width="0.7"><rect x="0.5" y="0.5" width="2.5" height="2.5"/><rect x="4" y="0.5" width="2.5" height="2.5"/><rect x="0.5" y="4" width="2.5" height="2.5"/><rect x="4" y="4" width="2.5" height="2.5"/></svg>
<svg class="a" style="left:564px;top:315px" width="7" height="7" fill="none" stroke="#8a8a8a" stroke-width="0.7"><path d="M0.5 1 L3.5 2 L6.5 1 V6 L3.5 6.8 L0.5 6 Z M3.5 2 V6.8"/></svg>
<svg class="a" style="left:573px;top:315px" width="7" height="7" fill="none" stroke="#8a8a8a" stroke-width="0.8"><path d="M0.5 1 H6.5 M1.5 1 V4 H5.5 V1 M3.5 4 V6.8 M2 6.8 H5"/></svg>
<div class="a sbt" style="left:585px;color:#5a5a5a">69%</div>
<div class="a" style="left:608px;top:318px;width:50px;height:1px;background:#b0b4ba"></div>
<div class="a" style="left:632px;top:316px;width:1px;height:4px;background:#9ea3a9"></div>
<div class="a zc" style="left:600px"></div>
<div class="a" style="left:602px;top:317.5px;width:4px;height:1px;background:#555"></div>
<div class="a zc" style="left:658px"></div>
<div class="a" style="left:660px;top:317.5px;width:4px;height:1px;background:#555"></div>
<div class="a" style="left:661.4px;top:316px;width:1px;height:4px;background:#555"></div>
<svg class="a" style="left:622px;top:313.5px" width="6" height="9"><path d="M0.5 0.5 H5.5 V6 L3 8.5 L0.5 6 Z" fill="#f4f4f4" stroke="#8a8f96" stroke-width="0.7"/></svg>
<svg class="a" style="left:669px;top:313.5px" width="9" height="9"><rect x="0.5" y="0.5" width="8" height="8" fill="#e8eaec" stroke="#9a9ea4" stroke-width="0.7"/><path d="M2 2 L3.8 3.8 M7 2 L5.2 3.8 M2 7 L3.8 5.2 M7 7 L5.2 5.2" stroke="#444" stroke-width="1"/></svg>
<div id="taskbar" class="a"></div>
<div class="a" style="left:0;top:323px;width:24px;height:20px;background:#4d1d2c"></div>
<svg class="a" style="left:7.7px;top:328.7px" width="9" height="9.5" fill="#fff"><path d="M0 1 L3.6 0.55 V4.1 H0 Z M4.2 0.45 L8.3 0 V4.1 H4.2 Z M0 4.7 H3.6 V8.3 L0 7.85 Z M4.2 4.7 H8.3 V8.9 L4.2 8.4 Z"/></svg>
<div class="a" style="left:24px;top:323px;width:171px;height:20.5px;background:#f0f0f0;border-bottom:1px solid #dadada"></div>
<svg class="a" style="left:29px;top:328px" width="10" height="10" fill="none" stroke="#333" stroke-width="0.9"><circle cx="6" cy="4" r="3"/><path d="M3.9 6.1 L0.8 9.2"/></svg>
<div class="a" style="left:44.3px;top:329px;font-size:8.5px;line-height:10px;color:#333;white-space:nowrap;transform:scaleX(0.84);transform-origin:0 0">Type here to search</div>
<!-- cortana & task view -->
<svg class="a" style="left:202px;top:328.5px" width="10" height="10" fill="none" stroke="#fff" stroke-width="0.95"><circle cx="5" cy="5" r="3.4"/></svg>
<svg class="a" style="left:226px;top:329px" width="10" height="9" fill="none" stroke="#fff" stroke-width="0.8"><path d="M0.5 0.5 H6.5 M0.5 8.5 H6.5"/><rect x="1.5" y="2.5" width="4" height="4"/><path d="M8 0.5 V8.5 M9.5 0.5 V8.5" stroke-width="0.6"/></svg>
<!-- app icons -->
<div class="a" style="left:248px;top:327px;width:12px;height:12px;background:#dde8f2;border:1px solid #b7c9dc"></div>
<div class="a" style="left:250px;top:329px;width:8px;height:6px;background:#f4f8fc;border:1px solid #8ea8c4"></div>
<div class="a" style="left:256px;top:335px;width:2px;height:2px;background:#e04040"></div>
<svg class="a" style="left:268px;top:327px" width="12" height="12"><defs><linearGradient id="ed" x1="0" y1="0" x2="1" y2="1"><stop offset="0" stop-color="#3bd47a"/><stop offset="0.5" stop-color="#1d9fe0"/><stop offset="1" stop-color="#0b5cad"/></linearGradient></defs><circle cx="6" cy="6" r="5.8" fill="url(#ed)"/><path d="M3 7 Q3 3.5 6.5 3.5 Q9.5 3.8 9.5 6 L4.8 6 Q5 8.8 8 8.5 Q9 8.3 9.8 7.8 Q8.5 11.5 5 11 Q2.5 10 3 7 Z" fill="#fff" opacity="0.85"/></svg>
<svg class="a" style="left:289px;top:327px" width="12" height="12"><rect x="0.5" y="0.5" width="10" height="9" fill="#fff" stroke="#1f8ad8" stroke-width="1"/><path d="M3 5.5 H9 M7 3.5 L9.3 5.5 L7 7.5" stroke="#1a9ae8" stroke-width="1.3" fill="none"/><rect x="4" y="9" width="7.5" height="2.5" fill="#2ab0f0"/></svg>
<svg class="a" style="left:308px;top:327px" width="13" height="12"><path d="M0.5 2 H5 L6 3.2 H12.5 V11 H0.5 Z" fill="#e8a820"/><rect x="0.5" y="4.5" width="12" height="6.5" fill="#ffc83a"/><rect x="3.5" y="7" width="6" height="2.5" fill="#3a7fd0"/></svg>
<div class="a" style="left:307px;top:342px;width:15px;height:1px;background:#8ab4e0"></div>
<svg class="a" style="left:327.5px;top:327.5px" width="12" height="12"><circle cx="6" cy="6" r="5.6" fill="#db4437"/><path d="M6 6 L1.2 8.8 A5.6 5.6 0 0 1 0.6 4.4 Z" fill="#0f9d58"/><path d="M6 0.4 A5.6 5.6 0 0 1 11 3.5 L6 3.5 Z" fill="#db4437"/><path d="M11.1 3.6 A5.6 5.6 0 0 1 6 11.6 L8.3 7.5 Z" fill="#f4c20d"/><path d="M1.1 8.7 A5.6 5.6 0 0 0 6 11.6 L8.3 7.5 L6 6 Z" fill="#0f9d58"/><circle cx="6" cy="6" r="2.6" fill="#fff"/><circle cx="6" cy="6" r="2" fill="#4285f4"/></svg>
<svg class="a" style="left:348px;top:327.5px" width="11" height="11"><rect x="0" y="0" width="11" height="11" rx="1" fill="#f5a623"/><path d="M3 11 V8 L5.5 10 L8 8 V11 Z" fill="#e08a10"/><rect x="3.8" y="1.8" width="3.4" height="6" rx="1.6" fill="none" stroke="#fff" stroke-width="0.8"/></svg>
<svg class="a" style="left:367.5px;top:327.5px" width="14" height="14"><circle cx="5.8" cy="5.8" r="5.6" fill="#2ea3dc"/><path d="M2.5 5.8 L9 3.3 L8 8.8 L5.8 7.3 L4.6 8.4 L4.6 6.6 L8 4.2 L4 6.3 Z" fill="#fff"/><rect x="5" y="7.5" width="8" height="5.5" fill="#e53935"/><text x="5.6" y="12" font-size="4.4" font-family="Liberation Sans" fill="#fff">680</text></svg>
<div class="a" style="left:366px;top:342px;width:15px;height:1px;background:#8ab4e0"></div>
<svg class="a" style="left:387px;top:327px" width="14" height="13"><ellipse cx="5" cy="5" rx="4.8" ry="4.2" fill="#2dc100"/><ellipse cx="9" cy="8.5" rx="4.2" ry="3.6" fill="#f2f2f2"/><circle cx="3.5" cy="4" r="0.6" fill="#1a6a00"/><circle cx="6.5" cy="4" r="0.6" fill="#1a6a00"/></svg>
<svg class="a" style="left:406px;top:327px" width="13" height="13"><defs><radialGradient id="ff" cx="0.7" cy="0.2" r="0.9"><stop offset="0" stop-color="#ffe04a"/><stop offset="0.45" stop-color="#ff8a2a"/><stop offset="0.8" stop-color="#f03a48"/><stop offset="1" stop-color="#d02070"/></radialGradient></defs><circle cx="6.5" cy="7" r="5.8" fill="url(#ff)"/><circle cx="5.8" cy="7" r="2.9" fill="#6c3ad0"/><path d="M3.5 6.5 Q5 5 7.5 6 Q6 4 4 4.5 Z" fill="#ffb040"/><path d="M8 0.8 Q11.5 3 11.8 6.5 L9.5 5 Z" fill="#ffcc40"/></svg>
<svg class="a" style="left:426.5px;top:327.5px" width="12" height="12"><circle cx="6" cy="6" r="5.6" fill="#db4437"/><path d="M11.1 3.6 A5.6 5.6 0 0 1 6 11.6 L8.3 7.5 Z" fill="#f4c20d"/><path d="M0.6 4.4 A5.6 5.6 0 0 0 6 11.6 L8.3 7.5 L6 6 L1.2 3.2 Z" fill="#0f9d58"/><circle cx="6" cy="6" r="2.6" fill="#fff"/><circle cx="6" cy="6" r="2" fill="#4285f4"/></svg>
<div class="a" style="left:425px;top:342px;width:15px;height:1px;background:#8ab4e0"></div>
<div class="a" style="left:442px;top:323px;width:17px;height:20px;background:rgba(255,255,255,0.17)"></div>
<div class="a" style="left:442px;top:342px;width:17px;height:1px;background:#9cc4ec"></div>
<svg class="a" style="left:444.5px;top:328px" width="11" height="11"><rect x="0" y="0" width="11" height="10.5" fill="#fbe6dc"/><rect x="0.5" y="0.5" width="10" height="9.5" fill="#fff" stroke="#d24726" stroke-width="0.8"/><text x="1.3" y="7.8" font-size="7.5" font-family="Liberation Sans" font-weight="bold" fill="#d24726">P</text><circle cx="8" cy="7" r="2.2" fill="#e86a40"/></svg>
<svg class="a" style="left:468.5px;top:328px" width="11" height="11"><circle cx="5.5" cy="5.5" r="5.2" fill="#1d8fd8" stroke="#fff" stroke-width="0.7"/><text x="2.8" y="8.6" font-size="8" font-weight="bold" font-family="Liberation Sans" fill="#fff">?</text></svg>
<!-- tray -->
<svg class="a" style="left:494px;top:327px" width="12" height="11"><circle cx="7" cy="4.5" r="3.2" fill="#ffb300"/><path d="M1.5 9.5 Q0.5 6.5 3.5 6 Q4.5 3.8 7 4.5 Q9.5 4.2 10 6.8 Q11.8 7.5 11 9.5 Z" fill="#e6f2fc" stroke="#9ccbf0" stroke-width="0.5"/></svg>
<div class="a tbt" style="left:510px;top:330px;font-size:6.6px">73°F</div>
<svg class="a" style="left:532px;top:330.5px" width="7" height="5" fill="none" stroke="#fff" stroke-width="0.9"><path d="M0.8 4 L3.5 1.2 L6.2 4"/></svg>
<svg class="a" style="left:544px;top:328px" width="7" height="11" fill="none" stroke="#fff" stroke-width="0.8"><rect x="1" y="2" width="5" height="7" rx="1"/><path d="M2 0.5 H5 M2 10.5 H5"/></svg>
<svg class="a" style="left:556px;top:327.5px" width="7" height="11" fill="#fff"><rect x="2" y="0.5" width="3.5" height="6" rx="1.7"/><path d="M1 5 Q1 8.5 3.7 8.5 Q6.5 8.5 6.5 5" fill="none" stroke="#fff" stroke-width="0.7"/><rect x="3.3" y="8.5" width="0.8" height="2"/></svg>
<svg class="a" style="left:567px;top:331px" width="10" height="6"><rect x="0.5" y="0.5" width="8" height="5" fill="none" stroke="#fff" stroke-width="0.8"/><rect x="1.8" y="1.8" width="5.5" height="2.4" fill="#fff"/><rect x="9" y="2" width="1" height="2" fill="#fff"/></svg>
<svg class="a" style="left:579px;top:328px" width="9" height="10" fill="none" stroke="#fff" stroke-width="0.7"><path d="M0.8 8.5 Q4 4 8.5 3.5 M2.8 8.5 Q5 6 8.5 5.6 M4.8 8.5 Q6 7.5 8.5 7.6"/><path d="M5 3 L8.5 9.5" stroke-width="0.6"/></svg>
<svg class="a" style="left:590px;top:329px" width="9" height="9" fill="none" stroke="#fff" stroke-width="0.8"><path d="M0.5 3.3 H2.5 L5 1 V8 L2.5 5.7 H0.5 Z"/><path d="M6.5 3 Q7.5 4.5 6.5 6"/></svg>
<div class="a tbt" style="left:603.5px;top:330.5px;font-size:5.9px">ENG</div>
<div class="a tbt" style="left:629.5px;top:326px;font-size:6px">09:40</div>
<div class="a tbt" style="left:622px;top:334px;font-size:6px;letter-spacing:-0.1px">03-06-2021</div>
<svg class="a" style="left:659px;top:327px" width="14" height="13"><path d="M0.5 0.5 H10.5 V7.5 H4 L2 9.5 V7.5 H0.5 Z" fill="none" stroke="#fff" stroke-width="0.9"/><path d="M2.5 3 H8.5 M2.5 5 H8.5" stroke="#fff" stroke-width="0.7"/><circle cx="9.3" cy="8.8" r="3.6" fill="#1a1a1a" stroke="#666" stroke-width="0.5"/><text x="7.9" y="10.7" font-size="5" font-family="Liberation Sans" fill="#fff">3</text></svg>
<div class="a" style="left:677px;top:323px;width:1px;height:20px;background:#6a7878"></div>
</body></html>
